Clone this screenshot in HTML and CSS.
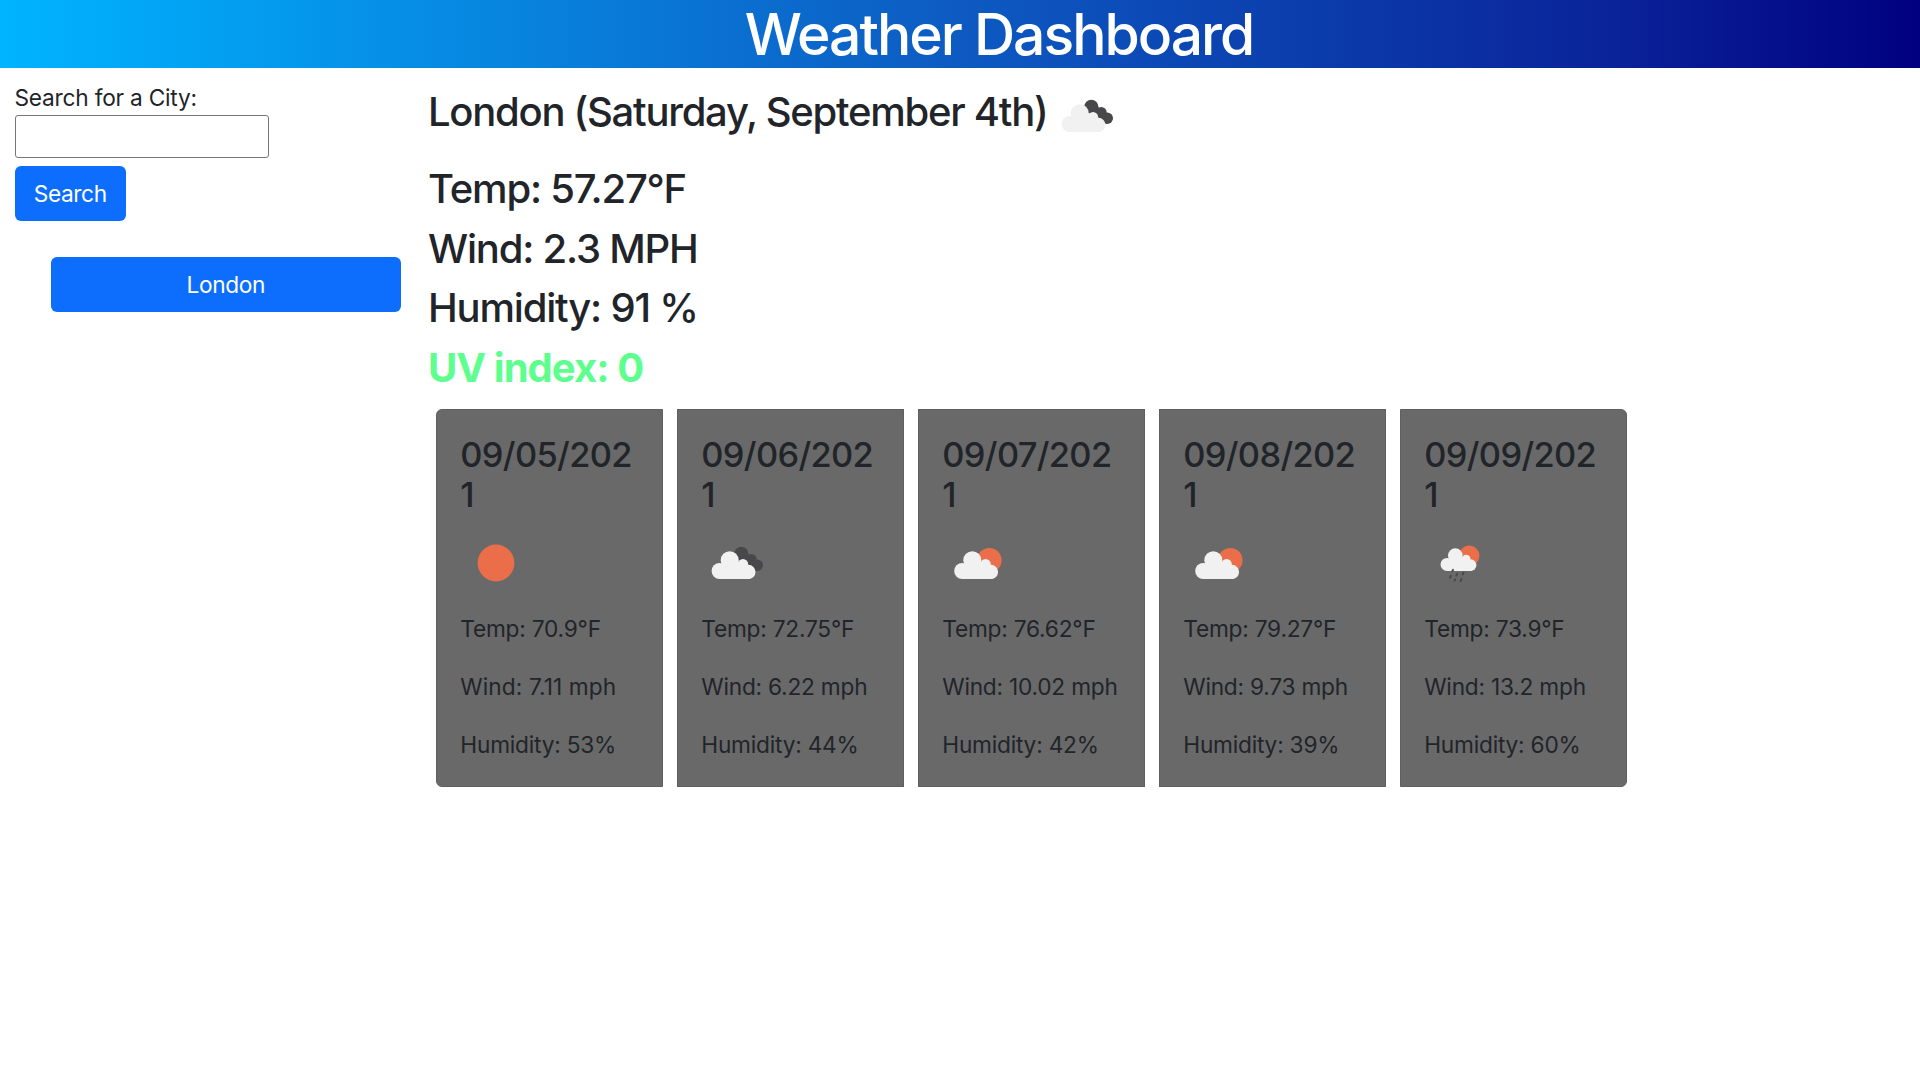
FILE: index.html
```html
<!DOCTYPE html>
<html lang="en">
<head>
<meta charset="utf-8">
<title>Weather Dashboard</title>
<link rel="stylesheet" href="styles.css">
</head>
<body>
<svg class="defs" width="0" height="0" aria-hidden="true">
  <symbol id="cloud" viewBox="0 0 72 72">
    <circle cx="28.7" cy="33.2" r="9"/><circle cx="18.6" cy="44" r="8"/><circle cx="42" cy="37.2" r="5.2"/><circle cx="47.4" cy="44.9" r="7.1"/><path d="M18.6 52V38L28 32L42 36L49 42V52Z"/>
  </symbol>
  <symbol id="clouds" viewBox="0 0 72 72">
    <g fill="#48484a"><circle cx="40.3" cy="26.7" r="7"/><circle cx="50.3" cy="32.3" r="5.4"/><circle cx="56.3" cy="38.3" r="5.7"/><path d="M34 30L45 22L56 44L50 41Z"/></g>
    <use href="#cloud" fill="#f1f1f1"/>
  </symbol>
  <symbol id="suncloud" viewBox="0 0 72 72">
    <circle cx="47.3" cy="33.2" r="12.3" fill="#eb6e4b"/>
    <use href="#cloud" x="1.6" width="72" height="72" fill="#f1f1f1"/>
  </symbol>
  <symbol id="sun" viewBox="0 0 72 72"><circle cx="36" cy="36" r="18.4" fill="#eb6e4b"/></symbol>
  <symbol id="rain" viewBox="0 0 72 72">
    <circle cx="45.2" cy="28.7" r="10.2" fill="#eb6e4b"/>
    <use href="#cloud" x="7.9" y="1.5" width="58.8" height="58.8" fill="#f1f1f1"/>
    <path d="M29 42.8l-.6 1.2M39.5 45.7l-.8 1.6M33.2 46.7l-.9 1.9M26.9 48.8l-.9 1.9M31.1 52.5l-.5 1M37.6 52.1l-.9 1.8" stroke="#48484a" stroke-width="1.9" stroke-linecap="round"/>
  </symbol>
</svg>
<header class="banner"><h1>Weather Dashboard</h1></header>
<div class="layout">
  <aside class="sidebar">
    <label for="city" class="label">Search for a City:</label>
    <input id="city" class="input" type="text">
    <button class="btn">Search</button>
    <button class="btn history">London</button>
  </aside>
  <main class="main">
    <h2 class="place">London (Saturday, September 4th)<svg class="icon"><use href="#clouds"/></svg></h2>
    <h2>Temp: 57.27°F</h2>
    <h2>Wind: 2.3 MPH</h2>
    <h2>Humidity: 91 %</h2>
    <h2 class="uv">UV index: 0</h2>
    <section class="cards">
      <article class="card"><h3>09/05/2021</h3><svg class="icon"><use href="#sun"/></svg><p>Temp: 70.9°F</p><p class="loose">Wind: 7.11 mph</p><p>Humidity: 53%</p></article>
      <article class="card"><h3>09/06/2021</h3><svg class="icon"><use href="#clouds"/></svg><p>Temp: 72.75°F</p><p>Wind: 6.22 mph</p><p>Humidity: 44%</p></article>
      <article class="card"><h3>09/07/2021</h3><svg class="icon"><use href="#suncloud"/></svg><p>Temp: 76.62°F</p><p>Wind: 10.02 mph</p><p>Humidity: 42%</p></article>
      <article class="card"><h3>09/08/2021</h3><svg class="icon"><use href="#suncloud"/></svg><p>Temp: 79.27°F</p><p>Wind: 9.73 mph</p><p>Humidity: 39%</p></article>
      <article class="card"><h3>09/09/2021</h3><svg class="icon"><use href="#rain"/></svg><p>Temp: 73.9°F</p><p>Wind: 13.2 mph</p><p>Humidity: 60%</p></article>
    </section>
  </main>
</div>
</body>
</html>
```
FILE: styles.css
```css
* { box-sizing: border-box; }
body { margin: 0; background: #fff; color: #212529; font: 400 22.7px/34.9px Inter, "Liberation Sans", sans-serif; letter-spacing: -0.22px; }
h1, h2, h3, p { margin: 0; font-weight: 500; }
.defs { display: block; height: 0; }
.banner { height: 68px; background: linear-gradient(to right, #00b4ff, #0d5ac2 50%, #0a2399 84%, #000080); color: #fff; text-align: center; padding: 2px 0 0 78px; }
h1 { font-size: 57px; line-height: 66px; letter-spacing: -2px; }
.layout { display: flex; }
.sidebar { width: 415px; padding: 13.3px 14.5px 0; display: flex; flex-direction: column; align-items: flex-start; }
.label { height: 33.6px; }
.input { width: 254px; height: 43px; border: 1.4px solid #767676; border-radius: 3px; background: #fff; }
.btn { height: 55px; margin-top: 8px; padding: 2px 19.3px 0; border: 0; border-radius: 6px; background: #0d6efd; color: #fff; font: inherit; letter-spacing: -0.4px; }
.btn.history { align-self: stretch; margin: 36.5px 0 0 36.5px; }
.main { padding-left: 13px; }
h2 { font-size: 40px; line-height: 48.8px; margin-bottom: 10.8px; letter-spacing: -1.2px; }
.place { display: flex; align-items: center; height: 88px; margin-bottom: 9px; letter-spacing: -1.27px; }
.icon { width: 72px; height: 72px; display: block; }
.place .icon { margin: 7px 0 0 3.5px; }
.uv { color: #5eff8f; font-weight: 700; margin-bottom: 16px; letter-spacing: -0.95px; }
.cards { display: flex; gap: 14.2px; padding-left: 7.8px; }
.card { width: 226.8px; height: 378px; padding: 25px 23.5px 0; background: #696969; border: 1px solid #5f5f5f; }
.card:first-child { border-radius: 6px 0 0 6px; }
.card:last-child { border-radius: 0 6px 6px 0; }
h3 { font-size: 34.4px; line-height: 40.7px; letter-spacing: -0.65px; word-break: break-all; }
.card .icon { margin: 11px 0 13.5px; }
.card p { font-weight: 400; white-space: nowrap; margin-bottom: 23px; }
.card .loose { letter-spacing: 0.1px; }
```
